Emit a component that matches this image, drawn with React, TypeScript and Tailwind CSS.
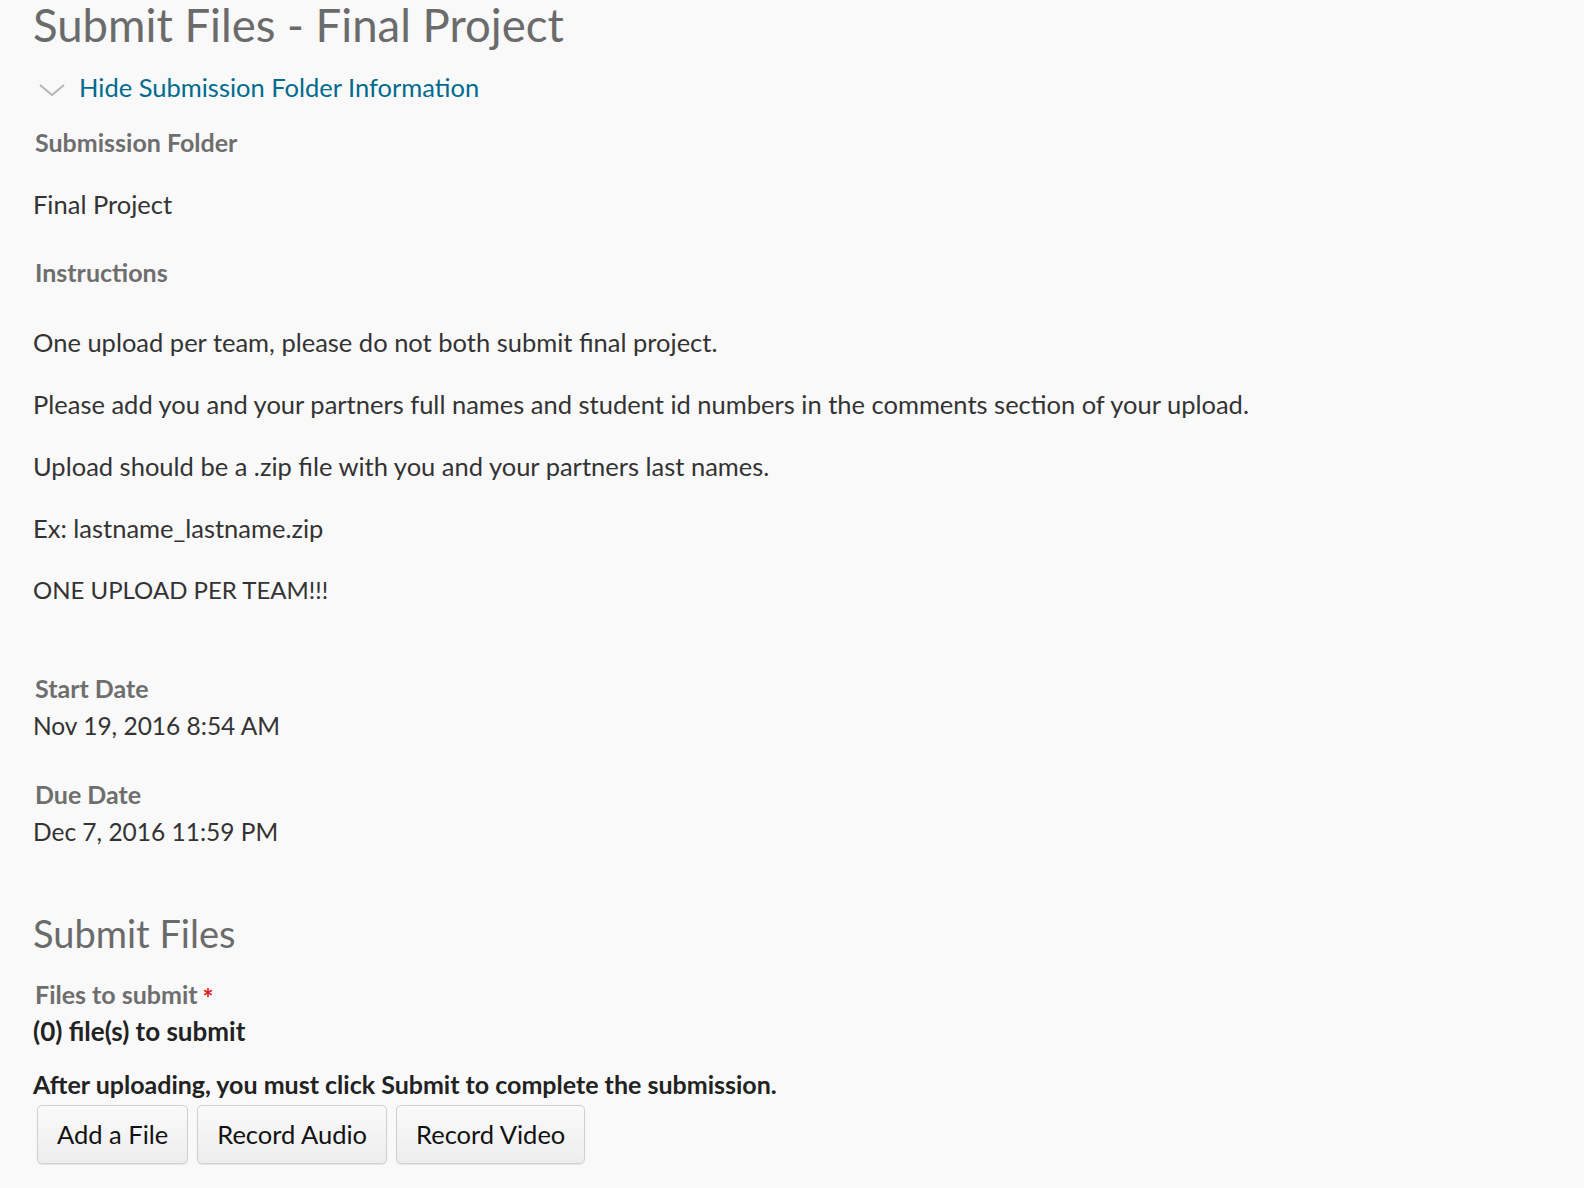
import React from "react";

const font = { fontFamily: "Lato, 'Noto Sans', sans-serif" };

function Label({ children, className = "" }: { children: React.ReactNode; className?: string }) {
  return <div className={`font-bold text-[25px] leading-[30px] text-[#6e6e6e] pl-[2px] ${className}`}>{children}</div>;
}

function Btn({ children }: { children: React.ReactNode }) {
  return (
    <button className="h-[59px] px-[19px] rounded-[5px] border border-[#cfcfcf] bg-gradient-to-b from-[#fafafa] to-[#ededed] text-[25.5px] text-[#111] shadow-[0_1px_1px_rgba(0,0,0,0.08)]">
      {children}
    </button>
  );
}

export default function App() {
  return (
    <div className="min-h-[1188px] w-full bg-[#f9f9f9] text-[#333] pl-[33px]" style={font}>
      <h1 className="text-[45.5px] leading-[50px] text-[#6b6b6b] font-normal pt-0">Submit Files - Final Project</h1>
      <div className="flex items-center mt-[22px] h-[30px]">
        <svg width="28" height="16" viewBox="0 0 28 16" className="ml-[5px] mt-[6px]">
          <path d="M2 3 L14 13 L26 3" fill="none" stroke="#b5b5b5" strokeWidth="2" />
        </svg>
        <span className="ml-[13px] text-[25.5px] text-[#006b8e]">Hide Submission Folder Information</span>
      </div>
      <Label className="mt-[25px]">Submission Folder</Label>
      <div className="mt-[32px] text-[25.5px] leading-[30px]">Final Project</div>
      <Label className="mt-[38px]">Instructions</Label>
      <div className="mt-[40px] text-[25.5px] leading-[30px] flex flex-col gap-[32px]">
        <p>One upload per team, please do not both submit final project.</p>
        <p>Please add you and your partners full names and student id numbers in the comments section of your upload.</p>
        <p>Upload should be a .zip file with you and your partners last names.</p>
        <p>Ex: lastname_lastname.zip</p>
        <p className="text-[24px]">ONE UPLOAD PER TEAM!!!</p>
      </div>
      <Label className="mt-[68px]">Start Date</Label>
      <div className="mt-[8px] text-[24.5px] leading-[30px]">Nov 19, 2016 8:54 AM</div>
      <Label className="mt-[38px]">Due Date</Label>
      <div className="mt-[8px] text-[24.5px] leading-[30px]">Dec 7, 2016 11:59 PM</div>
      <h2 className="mt-[64px] text-[38px] leading-[44px] text-[#6b6b6b] font-normal">Submit Files</h2>
      <Label className="mt-[24px] flex items-center">
        Files to submit<span className="text-[#e02020] text-[26px] leading-[20px] ml-[5px] mt-[8px]">*</span>
      </Label>
      <div className="mt-[7px] text-[26px] leading-[30px] font-bold text-[#222]">(0) file(s) to submit</div>
      <div className="mt-[23px] text-[25px] leading-[30px] font-bold text-[#222]">After uploading, you must click Submit to complete the submission.</div>
      <div className="flex gap-[9px] mt-[6px] pl-[4px]">
        <Btn>Add a File</Btn>
        <Btn>Record Audio</Btn>
        <Btn>Record Video</Btn>
      </div>
    </div>
  );
}
